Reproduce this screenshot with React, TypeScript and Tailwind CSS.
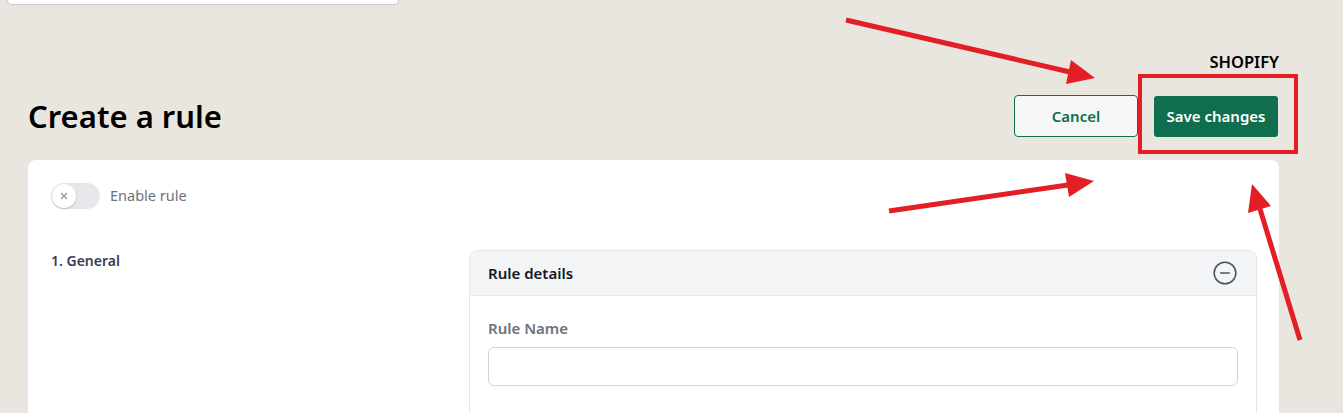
import { MinusCircle, X } from "lucide-react";

function Annotations() {
  return (
    <svg className="pointer-events-none absolute inset-0" width="1343" height="413" viewBox="0 0 1343 413">
      <g stroke="#e31e24" strokeWidth="5" strokeLinecap="butt">
        <line x1="846" y1="20" x2="1070" y2="72" />
        <line x1="889" y1="211" x2="1068" y2="185" />
        <line x1="1300" y1="340" x2="1260" y2="209" />
      </g>
      <g fill="#e31e24">
        <polygon points="1095,78 1066,84 1071,60" />
        <polygon points="1094,181 1069,197 1065,173" />
        <polygon points="1252,184 1271,206 1248,213" />
      </g>
      <rect x="1140" y="76" width="156" height="76" fill="none" stroke="#e31e24" strokeWidth="4" />
    </svg>
  );
}

export default function App() {
  return (
    <div className="relative h-[413px] overflow-hidden bg-[#e9e6df] font-['Noto_Sans',_'Open_Sans',_sans-serif]">
      {/* search box scrolled off the top */}
      <div className="ml-[7px] h-[5px] w-[392px] rounded-b-md border border-t-0 border-[#c9c9c9] bg-white" />

      <div className="pl-[28px] pr-[64px]">
        <div className="mt-[46px] flex justify-end">
          <span className="text-[16.5px] font-semibold leading-[22px] text-black">SHOPIFY</span>
        </div>

        <div className="mt-[22px] flex items-center justify-between">
          <h1 className="text-[31px] font-semibold leading-[40px] text-black">Create a rule</h1>
          <div className="mr-[1px] flex items-center gap-4">
            <button className="h-[42px] w-[124px] rounded-[4px] border border-[#0f6e4e] bg-[#f4f7f6] text-[15px] font-semibold text-[#0f6e4e]">
              Cancel
            </button>
            <button className="h-[41px] w-[124px] rounded-[3px] bg-[#0f6e4e] text-[15px] font-semibold text-white">
              Save changes
            </button>
          </div>
        </div>

        <div className="mt-[23px] rounded-lg bg-white pl-[23px] pr-[22px] pt-[23px]">
          <div className="flex items-center gap-[10px]">
            <div className="flex h-[26px] w-[49px] items-center rounded-full bg-[#e5e7eb] px-[1px]">
              <div className="flex h-[24px] w-[24px] items-center justify-center rounded-full bg-white shadow-[0_1px_2px_rgba(0,0,0,0.2)]">
                <X size={10} strokeWidth={4} className="text-[#9ca3af]" />
              </div>
            </div>
            <span className="text-[14.5px] text-[#6b7280]">Enable rule</span>
          </div>

          <div className="mt-[40px] grid grid-cols-[418px_1fr]">
            <div className="pt-[2px] text-[14px] font-semibold leading-[20px] text-[#374151]">1. General</div>
            <div className="mt-[1px] rounded-t-lg border border-[#e5e7eb]">
              <div className="flex h-[45px] items-center justify-between rounded-t-lg border-b border-[#e5e7eb] bg-[#f3f4f6] pl-[18px] pr-[18px]">
                <span className="text-[15px] font-semibold text-[#111827]">Rule details</span>
                <MinusCircle size={26} strokeWidth={1.4} className="text-[#4b5563]" />
              </div>
              <div className="px-[18px] pt-[22px] pb-[40px]">
                <div className="text-[15px] font-semibold leading-[20px] text-[#6b7280]">Rule Name</div>
                <input className="mt-[9px] h-[39px] w-full rounded-md border border-[#d1d5db] bg-white" />
              </div>
            </div>
          </div>
        </div>
      </div>

      <Annotations />
    </div>
  );
}
